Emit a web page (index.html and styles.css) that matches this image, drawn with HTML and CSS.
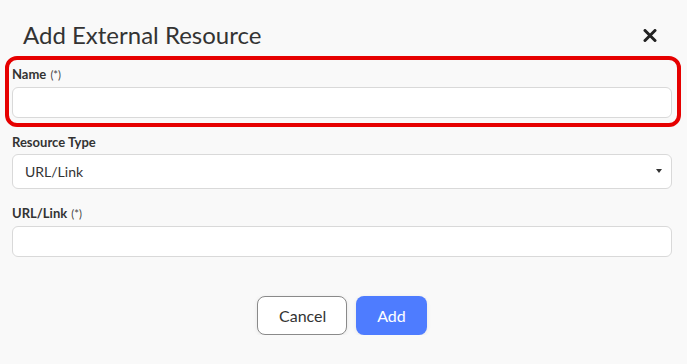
FILE: index.html
```html
<!DOCTYPE html>
<html lang="en">
<head>
    <meta charset="UTF-8">
    <meta name="viewport" content="width=device-width, initial-scale=1.0">
    <title>Add External Resource</title>
    <link rel="stylesheet" href="styles.css">
</head>
<body>
    <div class="modal">
        <div class="modal-header">
            <h1>Add External Resource</h1>
            <button class="close-btn" aria-label="Close">
                <svg width="14" height="13" viewBox="0 0 14 13">
                    <path d="M2 1.5 L12 11.5 M12 1.5 L2 11.5" stroke="#222" stroke-width="3" stroke-linecap="round"/>
                </svg>
            </button>
        </div>

        <div class="highlight">
            <div class="form-group">
                <label>Name <span class="req">(*)</span></label>
                <input type="text" class="input">
            </div>
        </div>

        <div class="form-group">
            <label>Resource Type</label>
            <div class="select-box">
                <span>URL/Link</span>
                <span class="caret"></span>
            </div>
        </div>

        <div class="form-group last">
            <label>URL/Link <span class="req">(*)</span></label>
            <input type="text" class="input">
        </div>

        <div class="modal-footer">
            <button class="btn btn-cancel">Cancel</button>
            <button class="btn btn-add">Add</button>
        </div>
    </div>
</body>
</html>
```

FILE: styles.css
```css
body {
    font-family: Lato, "Open Sans", sans-serif;
    margin: 0;
    background-color: #f9f9f9;
    color: #333;
}
.modal {
    padding: 0 15px 0 12px;
}
.modal-header {
    display: flex;
    justify-content: space-between;
    align-items: flex-start;
    padding: 21px 15px 0 11px;
    margin-bottom: 6px;
}
.modal-header h1 {
    margin: 0;
    font-size: 24px;
    font-weight: 400;
    line-height: 1.2;
    color: #333;
}
.close-btn {
    background: none;
    border: none;
    padding: 0;
    margin-top: 8px;
    cursor: pointer;
    line-height: 0;
}
.highlight {
    margin: 0 -9px 6px -7px;
    padding: 5px 5px 5px 3px;
    border: 4px solid #e60000;
    border-radius: 12px;
}
.form-group {
    margin-bottom: 15px;
}
.highlight .form-group,
.form-group.last {
    margin-bottom: 0;
}
label {
    display: block;
    font-size: 13px;
    font-weight: 700;
    line-height: 18px;
    margin-bottom: 3px;
}
.req {
    font-size: 11px;
    font-weight: 400;
    color: #444;
    margin-left: 1px;
}
.input {
    display: block;
    box-sizing: border-box;
    width: 100%;
    height: 31px;
    margin: 0;
    border: 1px solid #d9d9d9;
    border-radius: 6px;
    background: white;
    font-family: inherit;
    font-size: 14px;
}
.select-box {
    display: flex;
    justify-content: space-between;
    align-items: center;
    box-sizing: border-box;
    height: 35px;
    padding: 0 9px 0 12px;
    border: 1px solid #d9d9d9;
    border-radius: 6px;
    background: white;
    font-size: 14px;
    color: #333;
}
.caret {
    width: 0;
    height: 0;
    border-left: 3.5px solid transparent;
    border-right: 3.5px solid transparent;
    border-top: 4px solid #333;
}
.modal-footer {
    display: flex;
    justify-content: center;
    gap: 9px;
    padding-top: 39px;
}
.btn {
    height: 39px;
    padding: 0 21px;
    border-radius: 8px;
    font-family: inherit;
    font-size: 16px;
    cursor: pointer;
    box-shadow: 0 1px 4px rgba(0,0,0,0.08);
}
.btn-cancel {
    background: white;
    color: #333;
    border: 1px solid #8a8a8a;
    width: 90px;
}
.btn-add {
    background: #4e7cff;
    color: white;
    border: none;
    width: 71px;
}
```
